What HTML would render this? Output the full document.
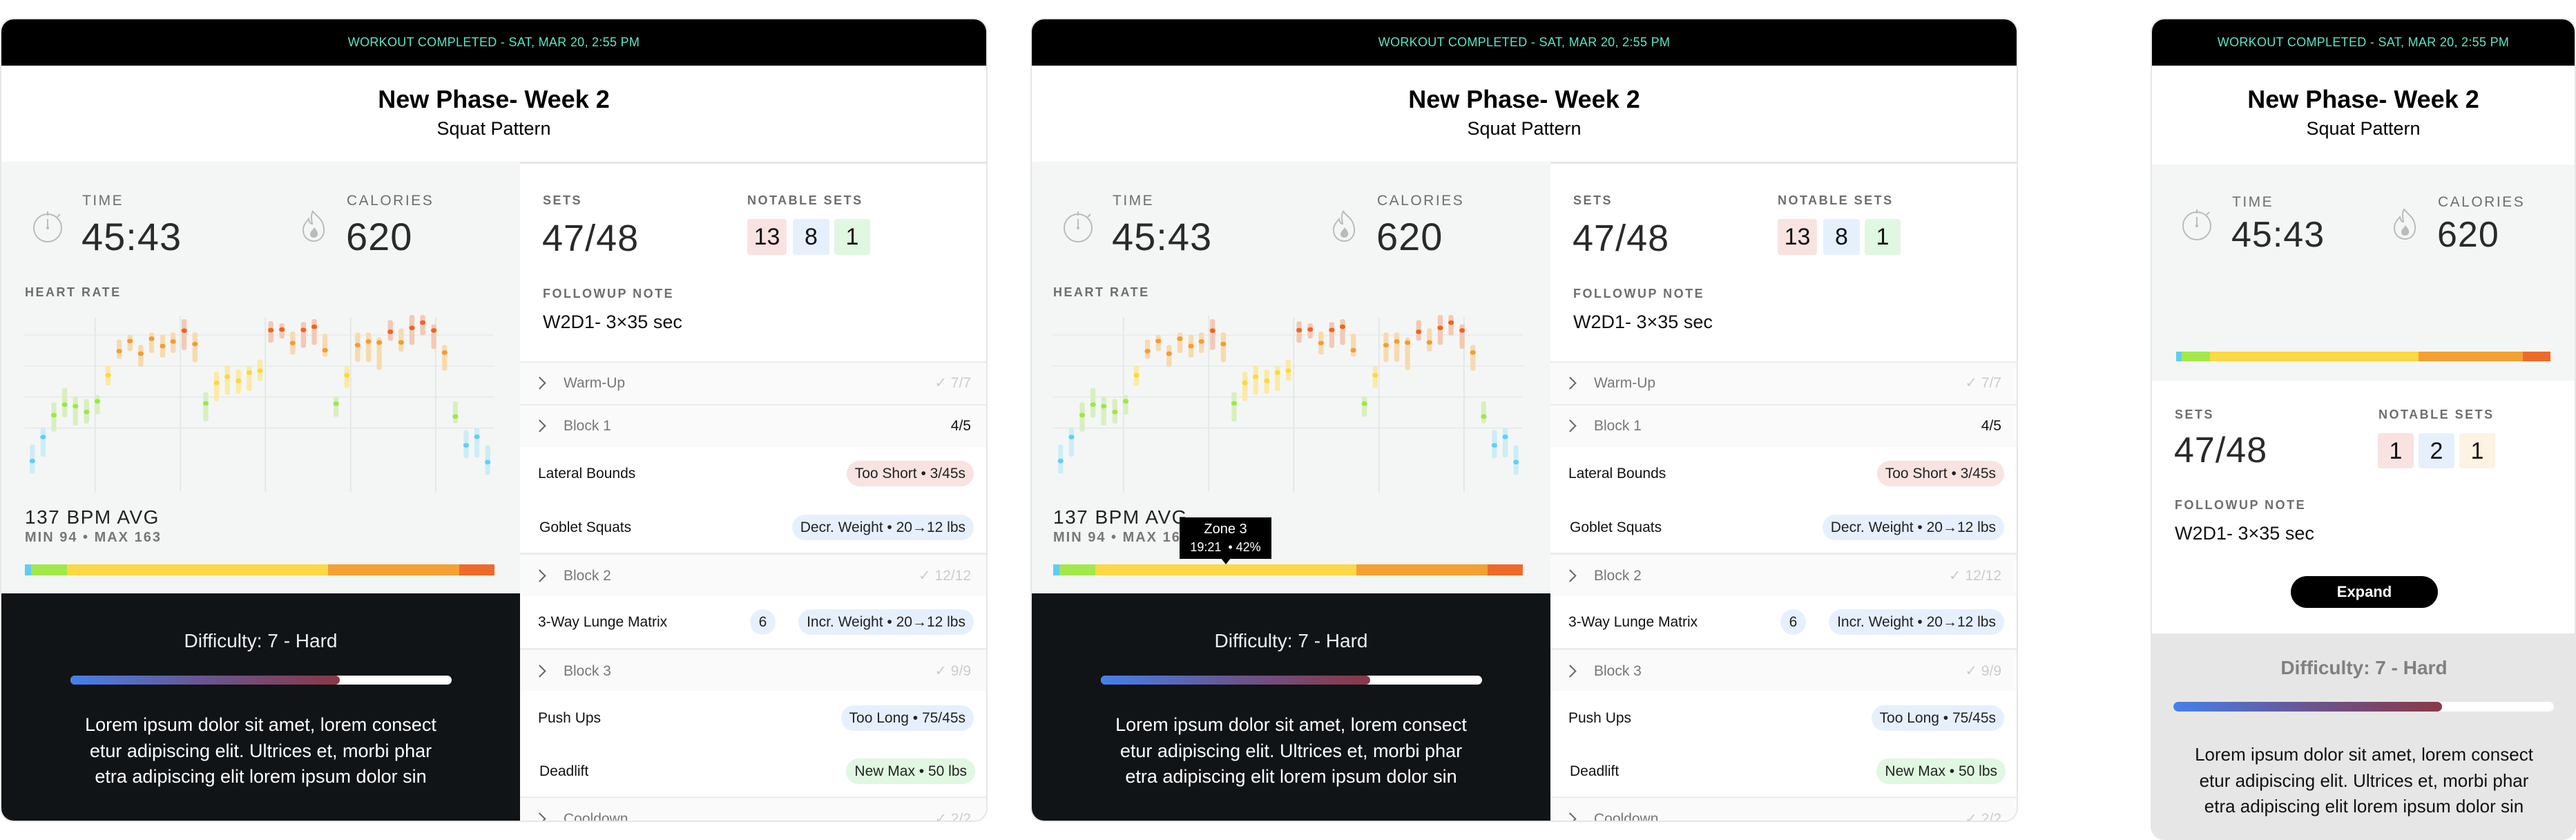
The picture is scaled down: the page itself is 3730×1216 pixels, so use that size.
<!DOCTYPE html>
<html><head><meta charset="utf-8">
<style>
*{margin:0;padding:0;box-sizing:border-box}
body{width:3730px;height:1216px;background:#fff;font-family:"Liberation Sans",sans-serif;position:relative;overflow:hidden}
.card{position:absolute;top:26px;width:1430px;height:1164px;border:2px solid #e6e6e6;border-radius:20px;overflow:hidden;background:#fff}
.a{position:absolute;white-space:nowrap}
.hdr{position:absolute;left:0;top:0;right:0;height:67px;background:#000;color:#5ee3c4;font-size:18px;text-align:center;line-height:67px;letter-spacing:0.3px}
.title{position:absolute;left:0;right:0;text-align:center;font-weight:bold;font-size:36px;color:#000}
.sub{position:absolute;left:0;right:0;text-align:center;font-size:27px;color:#000}
.lbl{font-size:20px;letter-spacing:2.5px;color:#6e6e6e;font-weight:bold}
.lbl2{font-size:21px;letter-spacing:2.5px;color:#6e6e6e}
.big{font-size:56px;color:#2a2a2a;font-weight:300;letter-spacing:1px}
.badge{position:absolute;height:52px;line-height:52px;text-align:center;font-size:34px;color:#111;border-radius:4px}
.row{position:absolute;left:0;right:0}
.gh{background:#fafafa;border-top:2px solid #ececec}
.rt{position:absolute;font-size:21px;line-height:30px;white-space:nowrap}
.pill{position:absolute;height:37px;line-height:37px;border-radius:19px;font-size:21px;padding:0 12px;color:#222;white-space:nowrap}
.chev{position:absolute;left:22px;width:13px;height:13px;border-right:2px solid #666;border-top:2px solid #666;transform:rotate(45deg)}
.zone{position:absolute;height:16px;display:flex}
.zone div{height:100%}
</style></head><body>
<svg width="0" height="0" style="position:absolute">
<defs>
<g id="chart">
<g stroke="#e5e7e6" stroke-width="4">
<line x1="30" y1="132" x2="1510" y2="132"/><line x1="30" y1="267" x2="1510" y2="267"/><line x1="30" y1="401" x2="1510" y2="401"/><line x1="30" y1="536" x2="1510" y2="536"/>
<line x1="252" y1="55" x2="252" y2="815"/><line x1="521" y1="48" x2="521" y2="810"/><line x1="789" y1="55" x2="789" y2="815"/><line x1="1058" y1="55" x2="1058" y2="815"/><line x1="1326" y1="55" x2="1326" y2="815"/>
</g>
<g id="bars"></g>
</g>
</defs>
</svg>

<div class="card" style="left:0">
<div class="hdr">WORKOUT COMPLETED - SAT, MAR 20, 2:55 PM</div>
<div class="title" style="top:94px;line-height:44px">New Phase- Week 2</div>
<div class="sub" style="top:140px;line-height:36px">Squat Pattern</div>
<div class="a" style="left:0;top:206px;width:751px;height:625px;background:#f4f6f5"></div>
<svg class="a" style="left:44px;top:275px" width="46" height="48" viewBox="0 0 46 48"><circle cx="23" cy="27" r="20" fill="none" stroke="#bbb" stroke-width="2"/><line x1="23" y1="3" x2="23" y2="9" stroke="#bbb" stroke-width="2"/><line x1="37" y1="11" x2="41" y2="7" stroke="#bbb" stroke-width="2"/><line x1="23" y1="14" x2="23" y2="27" stroke="#bbb" stroke-width="2"/><circle cx="23" cy="27" r="2" fill="#bbb"/></svg>
<div class="a lbl2" style="left:117px;top:251px">TIME</div>
<div class="a big" style="left:116px;top:282px">45:43</div>
<svg class="a" style="left:434px;top:275px" width="38" height="48" viewBox="0 0 38 48"><path d="M17 3 C 22 10 32 14 33 28 C 34 40 26 46 19 46 C 10 46 3 40 3 30 C 3 22 8 18 11 14 C 12 19 14 21 16 21 C 15 14 14 8 17 3 Z" fill="none" stroke="#bbb" stroke-width="2"/><path d="M19 26 C 22 30 25 33 24 37 C 23 40 21 41 18 41 C 15 41 13 39 13 36 C 13 32 17 30 19 26 Z" fill="#bbb"/></svg>
<div class="a lbl2" style="left:500px;top:251px">CALORIES</div>
<div class="a big" style="left:499px;top:282px">620</div>
<div class="a lbl" style="left:34px;top:385px;font-size:18px">HEART RATE</div>
<svg class="a" style="left:20px;top:413px" width="720" height="280" viewBox="0 0 1568 840" preserveAspectRatio="none"><use href="#chart"/></svg>
<div class="a" style="left:34px;top:705px;font-size:28px;letter-spacing:1.5px;color:#222">137 BPM AVG</div>
<div class="a" style="left:34px;top:739px;font-size:20px;letter-spacing:2px;color:#777;font-weight:bold">MIN 94 • MAX 163</div>
<div class="zone" style="left:34px;top:789px;width:680px"><div style="width:9px;background:#5fcdf3"></div><div style="width:52px;background:#a3e84b"></div><div style="width:378px;background:#fbd845"></div><div style="width:190px;background:#f3a134"></div><div style="width:51px;background:#ee6a2b"></div></div>
<div class="a" style="left:0;top:831px;width:751px;height:340px;background:#111417"></div>
<div class="a" style="left:0;width:751px;top:884px;text-align:center;font-size:28px;color:#eee">Difficulty: 7 - Hard</div>
<div class="a" style="left:100px;top:950px;width:552px;height:13px;border-radius:7px;background:#fff;overflow:hidden"><div style="width:390px;height:100%;border-radius:7px;background:linear-gradient(90deg,#4580ec,#6a5590 50%,#8a3848)"></div></div>
<div class="a" style="left:0;width:751px;top:1003px;text-align:center;font-size:27px;line-height:37.5px;color:#fff">Lorem ipsum dolor sit amet, lorem consect<br>etur adipiscing elit. Ultrices et, morbi phar<br>etra adipiscing elit lorem ipsum dolor sin</div>
<div class="a" style="left:751px;top:206px;width:679px;height:960px;border-top:3px solid #e6e6e6">
  <div class="a lbl" style="left:33px;top:43px;font-size:18px">SETS</div>
  <div class="a big" style="left:32px;top:77px;font-size:54px">47/48</div>
  <div class="a lbl" style="left:329px;top:43px;font-size:18px">NOTABLE SETS</div>
  <div class="badge" style="left:329px;top:80px;width:57px;background:#f8e3e1">13</div>
  <div class="badge" style="left:395px;top:80px;width:53px;background:#e6f0fd">8</div>
  <div class="badge" style="left:455px;top:80px;width:52px;background:#e0f7e1">1</div>
  <div class="a lbl" style="left:33px;top:178px;font-size:18px">FOLLOWUP NOTE</div>
  <div class="a" style="left:33px;top:214px;font-size:27px;color:#111">W2D1- 3×35 sec</div>
  <div class="row gh" style="top:286px;height:62px"><div class="chev" style="top:23px"></div><div class="rt" style="left:63px;top:15px;color:#777">Warm-Up</div><div class="rt" style="right:26px;top:15px;color:#ccc">✓ 7/7</div></div>
  <div class="row gh" style="top:348px;height:62px"><div class="chev" style="top:23px"></div><div class="rt" style="left:63px;top:15px;color:#777">Block 1</div><div class="rt" style="right:26px;top:15px;color:#111">4/5</div></div>
  <div class="rt" style="left:26px;top:434px;color:#111">Lateral Bounds</div><div class="pill" style="right:22px;top:430px;background:#f8e3e1">Too Short • 3/45s</div>
  <div class="rt" style="left:28px;top:512px;color:#111">Goblet Squats</div><div class="pill" style="right:22px;top:508px;background:#e6f0fd">Decr. Weight • 20→12 lbs</div>
  <div class="row gh" style="top:563px;height:63px;border-top-width:3px"><div class="chev" style="top:24px"></div><div class="rt" style="left:63px;top:16px;color:#777">Block 2</div><div class="rt" style="right:26px;top:16px;color:#ccc">✓ 12/12</div></div>
  <div class="rt" style="left:26px;top:649px;color:#111">3-Way Lunge Matrix</div><div class="pill" style="right:309px;top:645px;background:#e6f0fd;width:37px;padding:0;text-align:center">6</div><div class="pill" style="right:22px;top:645px;background:#e6f0fd">Incr. Weight • 20→12 lbs</div>
  <div class="row gh" style="top:701px;height:62px;border-top-width:3px"><div class="chev" style="top:24px"></div><div class="rt" style="left:63px;top:16px;color:#777">Block 3</div><div class="rt" style="right:26px;top:16px;color:#ccc">✓ 9/9</div></div>
  <div class="rt" style="left:26px;top:788px;color:#111">Push Ups</div><div class="pill" style="right:22px;top:784px;background:#e6f0fd">Too Long • 75/45s</div>
  <div class="rt" style="left:28px;top:865px;color:#111">Deadlift</div><div class="pill" style="right:20px;top:861px;background:#e0f7e1">New Max • 50 lbs</div>
  <div class="row gh" style="top:916px;height:62px"><div class="chev" style="top:24px"></div><div class="rt" style="left:63px;top:16px;color:#777">Cooldown</div><div class="rt" style="right:26px;top:16px;color:#ccc">✓ 2/2</div></div>
</div>
</div>

<div class="card" style="left:1492px">
<div class="hdr">WORKOUT COMPLETED - SAT, MAR 20, 2:55 PM</div>
<div class="title" style="top:94px;line-height:44px">New Phase- Week 2</div>
<div class="sub" style="top:140px;line-height:36px">Squat Pattern</div>
<div class="a" style="left:0;top:206px;width:751px;height:625px;background:#f4f6f5"></div>
<svg class="a" style="left:44px;top:275px" width="46" height="48" viewBox="0 0 46 48"><circle cx="23" cy="27" r="20" fill="none" stroke="#bbb" stroke-width="2"/><line x1="23" y1="3" x2="23" y2="9" stroke="#bbb" stroke-width="2"/><line x1="37" y1="11" x2="41" y2="7" stroke="#bbb" stroke-width="2"/><line x1="23" y1="14" x2="23" y2="27" stroke="#bbb" stroke-width="2"/><circle cx="23" cy="27" r="2" fill="#bbb"/></svg>
<div class="a lbl2" style="left:117px;top:251px">TIME</div>
<div class="a big" style="left:116px;top:282px">45:43</div>
<svg class="a" style="left:434px;top:275px" width="38" height="48" viewBox="0 0 38 48"><path d="M17 3 C 22 10 32 14 33 28 C 34 40 26 46 19 46 C 10 46 3 40 3 30 C 3 22 8 18 11 14 C 12 19 14 21 16 21 C 15 14 14 8 17 3 Z" fill="none" stroke="#bbb" stroke-width="2"/><path d="M19 26 C 22 30 25 33 24 37 C 23 40 21 41 18 41 C 15 41 13 39 13 36 C 13 32 17 30 19 26 Z" fill="#bbb"/></svg>
<div class="a lbl2" style="left:500px;top:251px">CALORIES</div>
<div class="a big" style="left:499px;top:282px">620</div>
<div class="a lbl" style="left:31px;top:385px;font-size:18px">HEART RATE</div>
<svg class="a" style="left:17px;top:413px" width="720" height="280" viewBox="0 0 1568 840" preserveAspectRatio="none"><use href="#chart"/></svg>
<div class="a" style="left:31px;top:705px;font-size:28px;letter-spacing:1.5px;color:#222">137 BPM AVG</div>
<div class="a" style="left:31px;top:739px;font-size:20px;letter-spacing:2px;color:#777;font-weight:bold">MIN 94 • MAX 163</div>
<div class="zone" style="left:31px;top:789px;width:680px"><div style="width:9px;background:#5fcdf3"></div><div style="width:52px;background:#a3e84b"></div><div style="width:378px;background:#fbd845"></div><div style="width:190px;background:#f3a134"></div><div style="width:51px;background:#ee6a2b"></div></div>
<div class="a" style="left:214px;top:721px;width:133px;height:60px;background:#000;color:#fff;text-align:center;font-size:20px;line-height:26px;padding-top:4px">Zone 3<br><span style="font-size:18px">19:21 &nbsp;• 42%</span></div>
<div class="a" style="left:274px;top:780px;width:0;height:0;border-left:7px solid transparent;border-right:7px solid transparent;border-top:9px solid #000"></div>
<div class="a" style="left:0;top:831px;width:751px;height:340px;background:#111417"></div>
<div class="a" style="left:0;width:751px;top:884px;text-align:center;font-size:28px;color:#eee">Difficulty: 7 - Hard</div>
<div class="a" style="left:100px;top:950px;width:552px;height:13px;border-radius:7px;background:#fff;overflow:hidden"><div style="width:390px;height:100%;border-radius:7px;background:linear-gradient(90deg,#4580ec,#6a5590 50%,#8a3848)"></div></div>
<div class="a" style="left:0;width:751px;top:1003px;text-align:center;font-size:27px;line-height:37.5px;color:#fff">Lorem ipsum dolor sit amet, lorem consect<br>etur adipiscing elit. Ultrices et, morbi phar<br>etra adipiscing elit lorem ipsum dolor sin</div>
<div class="a" style="left:751px;top:206px;width:679px;height:960px;border-top:3px solid #e6e6e6">
  <div class="a lbl" style="left:33px;top:43px;font-size:18px">SETS</div>
  <div class="a big" style="left:32px;top:77px;font-size:54px">47/48</div>
  <div class="a lbl" style="left:329px;top:43px;font-size:18px">NOTABLE SETS</div>
  <div class="badge" style="left:329px;top:80px;width:57px;background:#f8e3e1">13</div>
  <div class="badge" style="left:395px;top:80px;width:53px;background:#e6f0fd">8</div>
  <div class="badge" style="left:455px;top:80px;width:52px;background:#e0f7e1">1</div>
  <div class="a lbl" style="left:33px;top:178px;font-size:18px">FOLLOWUP NOTE</div>
  <div class="a" style="left:33px;top:214px;font-size:27px;color:#111">W2D1- 3×35 sec</div>
  <div class="row gh" style="top:286px;height:62px"><div class="chev" style="top:23px"></div><div class="rt" style="left:63px;top:15px;color:#777">Warm-Up</div><div class="rt" style="right:26px;top:15px;color:#ccc">✓ 7/7</div></div>
  <div class="row gh" style="top:348px;height:62px"><div class="chev" style="top:23px"></div><div class="rt" style="left:63px;top:15px;color:#777">Block 1</div><div class="rt" style="right:26px;top:15px;color:#111">4/5</div></div>
  <div class="rt" style="left:26px;top:434px;color:#111">Lateral Bounds</div><div class="pill" style="right:22px;top:430px;background:#f8e3e1">Too Short • 3/45s</div>
  <div class="rt" style="left:28px;top:512px;color:#111">Goblet Squats</div><div class="pill" style="right:22px;top:508px;background:#e6f0fd">Decr. Weight • 20→12 lbs</div>
  <div class="row gh" style="top:563px;height:63px;border-top-width:3px"><div class="chev" style="top:24px"></div><div class="rt" style="left:63px;top:16px;color:#777">Block 2</div><div class="rt" style="right:26px;top:16px;color:#ccc">✓ 12/12</div></div>
  <div class="rt" style="left:26px;top:649px;color:#111">3-Way Lunge Matrix</div><div class="pill" style="right:309px;top:645px;background:#e6f0fd;width:37px;padding:0;text-align:center">6</div><div class="pill" style="right:22px;top:645px;background:#e6f0fd">Incr. Weight • 20→12 lbs</div>
  <div class="row gh" style="top:701px;height:62px;border-top-width:3px"><div class="chev" style="top:24px"></div><div class="rt" style="left:63px;top:16px;color:#777">Block 3</div><div class="rt" style="right:26px;top:16px;color:#ccc">✓ 9/9</div></div>
  <div class="rt" style="left:26px;top:788px;color:#111">Push Ups</div><div class="pill" style="right:22px;top:784px;background:#e6f0fd">Too Long • 75/45s</div>
  <div class="rt" style="left:28px;top:865px;color:#111">Deadlift</div><div class="pill" style="right:20px;top:861px;background:#e0f7e1">New Max • 50 lbs</div>
  <div class="row gh" style="top:916px;height:62px"><div class="chev" style="top:24px"></div><div class="rt" style="left:63px;top:16px;color:#777">Cooldown</div><div class="rt" style="right:26px;top:16px;color:#ccc">✓ 2/2</div></div>
</div>
</div>

<div class="card" style="left:3114px;width:616px;height:1190px;border-radius:20px">
<div class="hdr">WORKOUT COMPLETED - SAT, MAR 20, 2:55 PM</div>
<div class="title" style="top:94px;line-height:44px">New Phase- Week 2</div>
<div class="sub" style="top:140px;line-height:36px">Squat Pattern</div>
<div class="a" style="left:0;top:210px;width:616px;height:313px;background:#f4f6f5"></div>
<svg class="a" style="left:42px;top:272px" width="46" height="48" viewBox="0 0 46 48"><circle cx="23" cy="27" r="20" fill="none" stroke="#bbb" stroke-width="2"/><line x1="23" y1="3" x2="23" y2="9" stroke="#bbb" stroke-width="2"/><line x1="37" y1="11" x2="41" y2="7" stroke="#bbb" stroke-width="2"/><line x1="23" y1="14" x2="23" y2="27" stroke="#bbb" stroke-width="2"/><circle cx="23" cy="27" r="2" fill="#bbb"/></svg>
<div class="a lbl2" style="left:116px;top:253px">TIME</div>
<div class="a big" style="left:115px;top:282px;font-size:52px">45:43</div>
<svg class="a" style="left:348px;top:272px" width="38" height="48" viewBox="0 0 38 48"><path d="M17 3 C 22 10 32 14 33 28 C 34 40 26 46 19 46 C 10 46 3 40 3 30 C 3 22 8 18 11 14 C 12 19 14 21 16 21 C 15 14 14 8 17 3 Z" fill="none" stroke="#bbb" stroke-width="2"/><path d="M19 26 C 22 30 25 33 24 37 C 23 40 21 41 18 41 C 15 41 13 39 13 36 C 13 32 17 30 19 26 Z" fill="#bbb"/></svg>
<div class="a lbl2" style="left:414px;top:253px">CALORIES</div>
<div class="a big" style="left:413px;top:282px;font-size:52px">620</div>
<div class="zone" style="left:35px;top:481px;width:542px;height:14px"><div style="width:8px;background:#5fcdf3"></div><div style="width:41px;background:#a3e84b"></div><div style="width:302px;background:#fbd845"></div><div style="width:151px;background:#f3a134"></div><div style="width:40px;background:#ee6a2b"></div></div>
<div class="a lbl" style="left:33px;top:562px;font-size:18px">SETS</div>
<div class="a big" style="left:32px;top:594px;font-size:52px">47/48</div>
<div class="a lbl" style="left:328px;top:562px;font-size:18px">NOTABLE SETS</div>
<div class="badge" style="left:327px;top:599px;width:52px;height:51px;background:#f8e3e1">1</div>
<div class="badge" style="left:386px;top:599px;width:52px;height:51px;background:#e6f0fd">2</div>
<div class="badge" style="left:445px;top:599px;width:52px;height:51px;background:#fdf3e2">1</div>
<div class="a lbl" style="left:33px;top:693px;font-size:18px">FOLLOWUP NOTE</div>
<div class="a" style="left:33px;top:729px;font-size:27px;color:#111">W2D1- 3×35 sec</div>
<div class="a" style="left:201px;top:806px;width:213px;height:46px;border-radius:23px;background:#000;color:#fff;font-weight:bold;font-size:22px;line-height:46px;text-align:center">Expand</div>
<div class="a" style="left:0;top:889px;width:616px;height:310px;background:#e6e6e6"></div>
<div class="a" style="left:0;width:614px;top:923px;text-align:center;font-size:28px;color:#808080;font-weight:bold">Difficulty: 7 - Hard</div>
<div class="a" style="left:31px;top:988px;width:551px;height:14px;border-radius:7px;background:#fff;overflow:hidden"><div style="width:389px;height:100%;border-radius:7px;background:linear-gradient(90deg,#4580ec,#6a5590 50%,#8a3848)"></div></div>
<div class="a" style="left:0;width:614px;top:1046px;text-align:center;font-size:26px;line-height:37.5px;color:#111">Lorem ipsum dolor sit amet, lorem consect<br>etur adipiscing elit. Ultrices et, morbi phar<br>etra adipiscing elit lorem ipsum dolor sin</div>
</div>

<script>
var d=[[54,607,735,679,'b'],[88,532,660,575,'b'],[122,424,552,480,'g'],[156,362,490,434,'g'],[190,398,525,441,'g'],[225,410,517,466,'g'],[259,393,477,420,'g'],[293,264,353,307,'y'],[328,152,236,202,'o'],[362,130,202,158,'o'],[396,175,270,213,'o'],[430,121,210,148,'o'],[465,130,230,180,'o'],[498,121,210,160,'o'],[533,63,197,113,'r'],[567,121,250,171,'o'],[601,380,508,429,'g'],[635,291,419,340,'y'],[669,264,392,313,'y'],[704,282,387,331,'y'],[738,268,375,295,'y'],[772,238,331,287,'y'],[806,72,166,111,'r'],[841,81,147,108,'r'],[875,117,217,167,'o'],[909,76,188,110,'r'],[943,63,175,96,'r'],[977,126,226,198,'o'],[1012,398,487,430,'g'],[1046,268,362,307,'y'],[1080,121,249,176,'o'],[1114,121,249,160,'o'],[1148,143,284,165,'o'],[1183,67,157,118,'r'],[1217,103,204,164,'o'],[1251,45,175,101,'r'],[1285,45,134,78,'r'],[1320,85,192,112,'r'],[1354,175,287,208,'o'],[1388,420,515,486,'g'],[1422,545,667,611,'b'],[1456,536,664,574,'b'],[1490,611,740,684,'b']];
var c={b:['#cdedf6','#5fcff6'],g:['#d9efbf','#9be84a'],y:['#fbeaa6','#fcd83e'],o:['#f7dab0','#f29d33'],r:['#f3c9b4','#ee6424']};
var s='';d.forEach(function(e){var k=c[e[4]];s+='<rect x="'+(e[0]-8)+'" y="'+e[1]+'" width="16" height="'+(e[2]-e[1])+'" rx="7" fill="'+k[0]+'"/><ellipse cx="'+e[0]+'" cy="'+e[3]+'" rx="9" ry="10" fill="'+k[1]+'"/>';});
document.getElementById('bars').innerHTML=s;
</script>
</body></html>
